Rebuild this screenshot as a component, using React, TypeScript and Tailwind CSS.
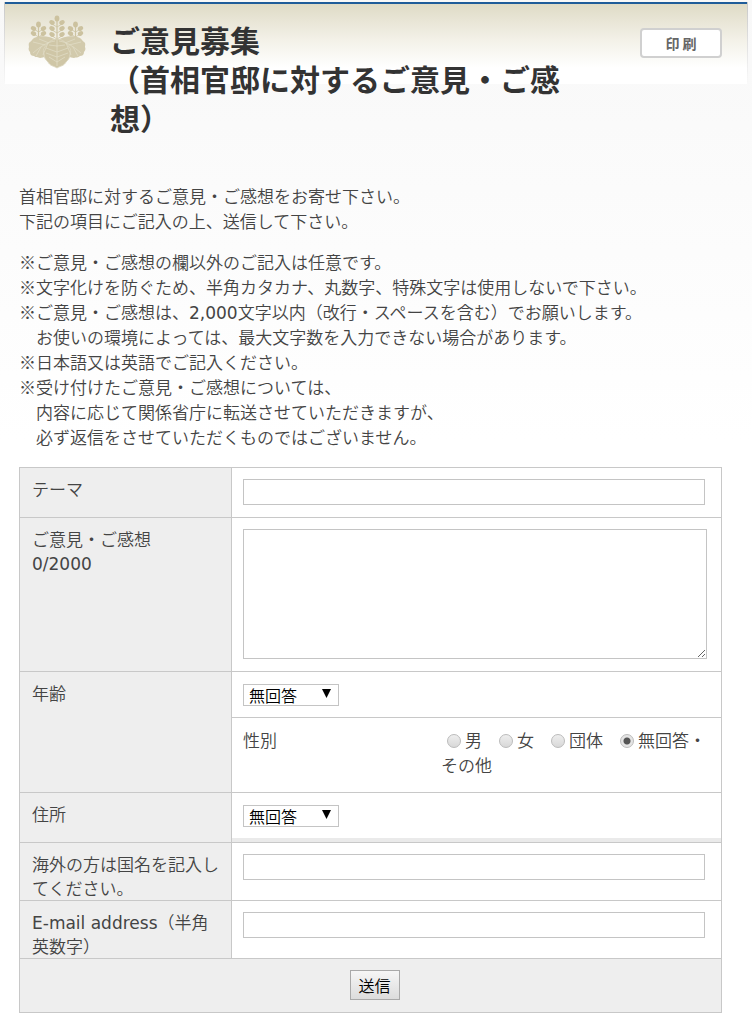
import { useState } from 'react'

const notes = [
  '※ご意見・ご感想の欄以外のご記入は任意です。',
  '※文字化けを防ぐため、半角カタカナ、丸数字、特殊文字は使用しないで下さい。',
]

const genders = ['男', '女', '団体', '無回答・その他']

// [x, y, tilt]
const florets = [
  [29, 3.5, 0], [24, 7.5, 30], [34, 7.5, -30], [24, 13.5, 30], [34, 13.5, -30], [24, 19.5, 30], [34, 19.5, -30],
  [10.5, 9.5, 0], [5.5, 13.5, 30], [15.5, 13.5, -30], [5.5, 18.5, 30], [15.5, 18.5, -30],
  [47.5, 9.5, 0], [42.5, 13.5, 30], [52.5, 13.5, -30], [42.5, 18.5, 30], [52.5, 18.5, -30],
]

function Emblem() {
  return (
    <svg viewBox="0 0 58 54" className="w-[58px] h-[54px] shrink-0" aria-hidden="true">
      <g stroke="#cdc4a2" strokeWidth="1.2" fill="none">
        <path d="M29 3v22M10.500 9v16M47.500 9v16" />
        <path d="M24 9l5 3 5-3M24 15l5 3 5-3M24 21l5 3 5-3M6 19l4.500 3 5-3M42.500 19l5 3 5-3M6 14l4.500 3 5-3M42.500 14l5 3 5-3" strokeWidth="0.8" />
      </g>
      {florets.map(([x, y, tilt], i) => (
        <ellipse key={i} cx={x} cy={y} rx={tilt ? 2.8 : 2.4} ry={tilt ? 2.2 : 2.9} transform={`rotate(${tilt} ${x} ${y})`} fill="#ccc29f" />
      ))}
      <path d="M28 25C23 21 12 20 6 23c-2 1-2 3-4 4s-1 4-1 5c-1 2 0 4 1 5 0 3 2 4 4 4 2 2 4 1 6 2 8 0 13-9 16-18z" fill="#d2caac" />
      <path d="M30 25c5-4 16-5 22-2 2 1 2 3 4 4s1 4 1 5c1 2 0 4-1 5 0 3-2 4-4 4-2 2-4 1-6 2-8 0-13-9-16-18z" fill="#d2caac" />
      <path d="M29 24c-5 0-10 4-12 8-2 2-2 5-1 7 0 4 2 6 4 8 2 4 6 4 9 6 3-2 7-2 9-6 2-2 4-4 4-8 1-2 1-5-1-7-2-4-7-8-12-8z" fill="#cfc6a6" stroke="#ddd7c0" strokeWidth="0.9" />
      <g fill="none" stroke="#e3dec9" strokeWidth="0.7">
        <path d="M29 25v26M29 31l-8-1M29 31l8-1M29 37l-11-4M29 37l11-4M29 42l-11-4M29 42l11-4M29 47l-8-5M29 47l8-5" />
        <path d="M27 26C19 27 12 32 5 38M21 28l-10-4M17 30l-12-3M20 28l-5 12M13 32l-5 9" />
        <path d="M31 26c8 1 15 6 22 12M37 28l10-4M41 30l12-3M38 28l5 12M45 32l5 9" />
      </g>
    </svg>
  )
}

function Row({ label, htmlFor, children }: { label: React.ReactNode; htmlFor: string; children: React.ReactNode }) {
  return (
    <div className="flex border-b border-[#c8c8c8]">
      <label htmlFor={htmlFor} className="w-[212px] shrink-0 bg-[#eee] border-r border-[#c8c8c8] pt-[9px] px-3 leading-6">
        {label}
      </label>
      <div className="flex-1 min-w-0 bg-white">{children}</div>
    </div>
  )
}

function TextInput({ id, type = 'text' }: { id: string; type?: string }) {
  return (
    <div className="pt-[11px] pb-3 pl-[11px] pr-4">
      <input id={id} type={type} className="block w-full h-[26px] px-1 bg-white border border-[#c4c4c4]" />
    </div>
  )
}

function Select({ id }: { id: string }) {
  return (
    <div className="pt-3 pb-[11px] pl-[11px]">
      <div className="relative w-24 h-[22px]">
        <select id={id} className="block appearance-none w-full h-full pl-[5px] text-base leading-5 text-black bg-white border border-[#c4c4c4]">
          <option>無回答</option>
        </select>
        <svg viewBox="0 0 9 9" className="absolute right-2 top-[5px] w-[9px] h-[9px] pointer-events-none">
          <path d="M0 0h9L4.500 9z" fill="#000" />
        </svg>
      </div>
    </div>
  )
}

export default function App() {
  const [opinion, setOpinion] = useState('')
  const [gender, setGender] = useState('無回答・その他')

  return (
    <div className="min-h-screen pt-[2px] pb-3 bg-[linear-gradient(#f8f8f8,#ffffff_440px)] font-['Noto_Sans_CJK_JP',sans-serif] font-[350] text-[17px] leading-[25px] text-[#444]">
      <div className="mx-1 px-px bg-[linear-gradient(#c8c8c8,transparent)] bg-[length:100%_82px] bg-no-repeat">
        <header className="flex items-start border-t-2 border-[#1f5c99] pl-[23px] pr-[25px] bg-[linear-gradient(#dfdbc6,#f3f1e8_45%,#ffffff_80%)] bg-[length:100%_80px] bg-no-repeat">
          <div className="pt-[11px]">
            <Emblem />
          </div>
          <h1 className="flex-1 mt-4 ml-6 mr-[60px] text-[30px] leading-[39px] font-bold text-[#333]">
            ご意見募集
            <br />
            （首相官邸に対するご意見・ご感想）
          </h1>
          <button className="mt-6 w-[82px] h-[30px] shrink-0 rounded border-2 border-[#d0d0d0] bg-white text-sm leading-5 font-bold text-[#666]">
            印 刷
          </button>
        </header>
      </div>

      <main className="pl-[19px] pr-[30px]">
        <p className="mt-[46px]">
          首相官邸に対するご意見・ご感想をお寄せ下さい。
          <br />
          下記の項目にご記入の上、送信して下さい。
        </p>

        <div className="mt-4">
          {notes.map((n) => (
            <p key={n}>{n}</p>
          ))}
          <p>
            ※ご意見・ご感想は、<span className="font-['DejaVu_Sans',sans-serif] font-normal leading-none">2,000</span>文字以内（改行・スペースを含む）でお願いします。
          </p>
          <p className="pl-[17px]">お使いの環境によっては、最大文字数を入力できない場合があります。</p>
          <p>※日本語又は英語でご記入ください。</p>
          <p>※受け付けたご意見・ご感想については、</p>
          <p className="pl-[17px]">
            内容に応じて関係省庁に転送させていただきますが、
            <br />
            必ず返信をさせていただくものではございません。
          </p>
        </div>

        <form className="mt-[18px] border border-b-0 border-[#c8c8c8]" onSubmit={(e) => e.preventDefault()}>
          <Row label="テーマ" htmlFor="theme">
            <TextInput id="theme" />
          </Row>

          <Row
            htmlFor="opinion"
            label={
              <>
                ご意見・ご感想
                <br />
                <span className="font-['DejaVu_Sans',sans-serif] font-normal leading-none">{opinion.length}/2000</span>
              </>
            }
          >
            <div className="pt-[11px] pb-3 pl-[11px] pr-[14px]">
              <textarea
                id="opinion"
                maxLength={2000}
                value={opinion}
                onChange={(e) => setOpinion(e.target.value)}
                className="block w-full h-[130px] px-1 bg-white border border-[#c4c4c4]"
              />
            </div>
          </Row>

          <Row label="年齢" htmlFor="age">
            <Select id="age" />
            <div role="radiogroup" aria-labelledby="gender" className="flex border-t border-[#c8c8c8] pt-[9px] pb-[15px] px-[11px]">
              <span id="gender" className="flex-1">性別</span>
              <div className="w-[269px]">
                {genders.map((g) => (
                  <label key={g} className="mr-[11px]">
                    <input
                      type="radio"
                      name="gender"
                      checked={gender === g}
                      onChange={() => setGender(g)}
                      className="appearance-none w-[14px] h-[14px] ml-[6px] mr-1 align-[-1px] rounded-full border border-[#bbb] bg-[linear-gradient(#eee,#d8d8d8)] checked:bg-[radial-gradient(circle,#555_3px,#e4e4e4_4px)]"
                    />
                    {g}
                  </label>
                ))}
              </div>
            </div>
          </Row>

          <Row label="住所" htmlFor="address">
            <Select id="address" />
            <div className="h-1 bg-[#eaeaea]" />
          </Row>

          <Row label="海外の方は国名を記入してください。" htmlFor="country">
            <TextInput id="country" />
          </Row>

          <Row
            htmlFor="email"
            label={
              <>
                <span className="font-['DejaVu_Sans',sans-serif] font-normal leading-none">E-mail address</span>（半角英数字）
              </>
            }
          >
            <TextInput id="email" type="email" />
          </Row>

          <div className="flex justify-center pt-[11px] pb-3 pl-2 bg-[#eee] border-b border-[#c8c8c8]">
            <button
              type="submit"
              className="w-[50px] h-[30px] border border-[#a9a9a9] bg-[linear-gradient(#f6f6f6,#dcdcdc)] text-base leading-6 text-black"
            >
              送信
            </button>
          </div>
        </form>
      </main>
    </div>
  )
}
